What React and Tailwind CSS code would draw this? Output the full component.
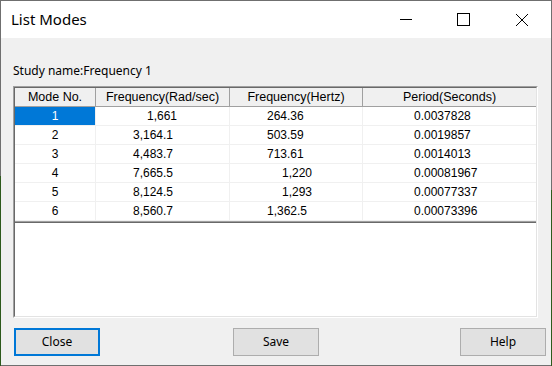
import React from 'react';

const rows = [
  { mode: '1', rad: '1,661', radPad: 'pl-[51px]', hz: '264.36', hzPad: 'pl-[37px]', period: '0.0037828' },
  { mode: '2', rad: '3,164.1', radPad: 'pl-[37px]', hz: '503.59', hzPad: 'pl-[37px]', period: '0.0019857' },
  { mode: '3', rad: '4,483.7', radPad: 'pl-[37px]', hz: '713.61', hzPad: 'pl-[37px]', period: '0.0014013' },
  { mode: '4', rad: '7,665.5', radPad: 'pl-[37px]', hz: '1,220', hzPad: 'pl-[52px]', period: '0.00081967' },
  { mode: '5', rad: '8,124.5', radPad: 'pl-[37px]', hz: '1,293', hzPad: 'pl-[52px]', period: '0.00077337' },
  { mode: '6', rad: '8,560.7', radPad: 'pl-[37px]', hz: '1,362.5', hzPad: 'pl-[37px]', period: '0.00073396' },
];

const headers = [
  { label: 'Mode No.', w: 'w-[81px] border-r' },
  { label: 'Frequency(Rad/sec)', w: 'w-[134px] border-r' },
  { label: 'Frequency(Hertz)', w: 'w-[133px] border-r' },
  { label: 'Period(Seconds)', w: 'flex-1' },
];

export default function App() {
  return (
    <div className="w-[552px] h-[366px] flex">
      {/* window edges: desktop shows through at the lower sides */}
      <div className="w-px h-full bg-[linear-gradient(to_bottom,#6f6f6f_176px,#2e5a1c_176px)]" />
      <div className="flex-1 flex flex-col border-t border-b border-[#6f6f6f] bg-[#f0f0f0] font-['Noto_Sans',sans-serif] text-black">
        {/* title bar */}
        <div className="h-[37px] bg-white flex items-center">
          <span className="pl-[10px] text-[15px] leading-none">List Modes</span>
          <div className="ml-auto mr-[23px] flex items-center">
            <svg width="12" height="13" viewBox="0 0 12 13">
              <line x1="0" y1="6.5" x2="12" y2="6.5" stroke="#000" strokeWidth="1" />
            </svg>
            <svg width="13" height="13" viewBox="0 0 13 13" className="ml-[45px]">
              <rect x="0.5" y="0.5" width="12" height="12" fill="none" stroke="#000" strokeWidth="1" />
            </svg>
            <svg width="12" height="12" viewBox="0 0 12 12" className="ml-[46px]">
              <line x1="0" y1="0" x2="12" y2="12" stroke="#000" strokeWidth="1" />
              <line x1="12" y1="0" x2="0" y2="12" stroke="#000" strokeWidth="1" />
            </svg>
          </div>
        </div>

        <div className="flex-1 flex flex-col pt-[25px]">
          <div className="pl-[12px] text-[12px] leading-[16px]">Study name:Frequency 1</div>

          {/* list view */}
          <div className="ml-[12px] mt-[7px] w-[525px] h-[232px] border border-t-[#a0a0a0] border-l-[#a0a0a0] border-r-white border-b-white">
            <div className="w-full h-full flex flex-col border border-t-[#696969] border-l-[#696969] border-r-[#e3e3e3] border-b-[#e3e3e3] bg-white font-['Liberation_Sans',Arial,sans-serif] text-[12px]">
              <div className="flex h-[19px] bg-[#f0f0f0] border-b border-[#a0a0a0]">
                {headers.map((h) => (
                  <div key={h.label} className={`${h.w} border-[#a0a0a0] flex items-center justify-center text-[12.5px]`}>
                    {h.label}
                  </div>
                ))}
              </div>

              {rows.map((r, i) => (
                <div key={r.mode} className="flex h-[19px] border-b border-[#f0f0f0]">
                  <div
                    className={`w-[81px] border-r border-[#f0f0f0] flex items-center justify-center ${
                      i === 0 ? 'bg-[#0078d7] text-white' : ''
                    }`}
                  >
                    {r.mode}
                  </div>
                  <div className={`w-[134px] border-r border-[#f0f0f0] flex items-center ${r.radPad}`}>{r.rad}</div>
                  <div className={`w-[133px] border-r border-[#f0f0f0] flex items-center ${r.hzPad}`}>{r.hz}</div>
                  <div className="flex-1 flex items-center pl-[51px]">{r.period}</div>
                </div>
              ))}

              <div className="h-[2px] border-t border-b border-t-[#a0a0a0] border-b-[#696969]" />
              <div className="flex-1" />
            </div>
          </div>

          {/* buttons */}
          <div className="mt-[10px] flex text-[12px]">
            <button className="ml-[13px] w-[86px] h-[28px] bg-[#e1e1e1] border-2 border-[#0078d7]">Close</button>
            <button className="ml-[133px] w-[86px] h-[28px] bg-[#e1e1e1] border border-[#adadad]">Save</button>
            <button className="ml-auto mr-[5px] w-[86px] h-[28px] bg-[#e1e1e1] border border-[#adadad]">Help</button>
          </div>
        </div>
      </div>
      <div className="w-px h-full bg-[linear-gradient(to_bottom,#6f6f6f_190px,#2e5a1c_190px)]" />
    </div>
  );
}
